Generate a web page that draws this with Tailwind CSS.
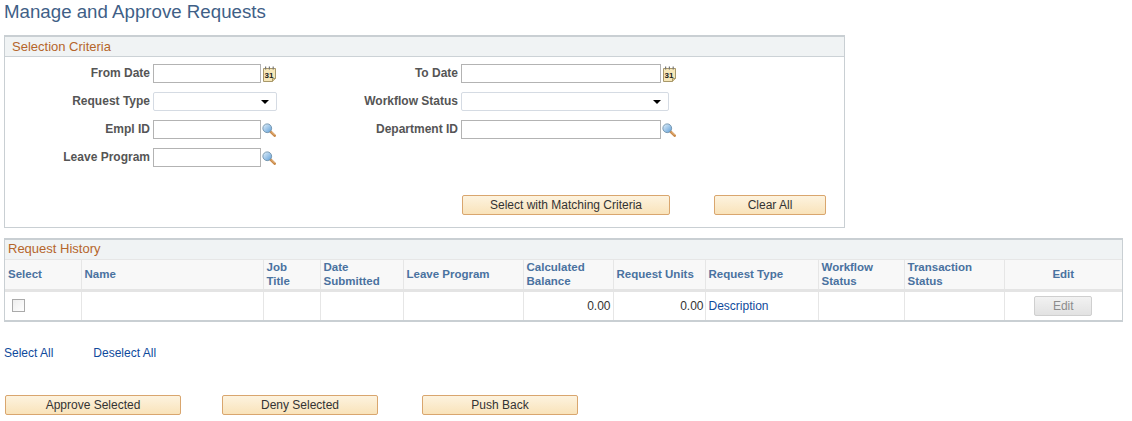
<!DOCTYPE html>
<html lang="en">
<head>
<meta charset="utf-8">
<title>Manage and Approve Requests</title>
<script src="https://cdn.jsdelivr.net/npm/@tailwindcss/browser@4"></script>
</head>
<body class="bg-white font-['Liberation_Sans',Arial,sans-serif] text-[12px] text-[#333]">
<svg class="absolute w-0 h-0">
    <defs>
        <linearGradient id="lens" x1="0" y1="0" x2="1" y2="1">
            <stop offset="0" stop-color="#e4f1fb"/>
            <stop offset="1" stop-color="#5f9fd8"/>
        </linearGradient>
        <symbol id="search" viewBox="0 0 16 16">
            <path d="M9.5 9.5 L14.5 14.5" stroke="#c98a4a" stroke-width="3" stroke-linecap="round"/>
            <path d="M10.5 9.8 L14.6 13.9" stroke="#f0c48e" stroke-width="1"/>
            <circle cx="6" cy="6" r="5" fill="url(#lens)" stroke="#6d8fa8" stroke-width="1"/>
        </symbol>
        <symbol id="cal" viewBox="0 0 13 16">
            <path d="M0.5 2.5H12.5V12.5L9.5 15.5H0.5Z" fill="#f6e7b8" stroke="#a8986a"/>
            <path d="M9.5 15.5V12.5H12.5" fill="#d9c88e" stroke="#a8986a"/>
            <rect x="2" y="0.5" width="1.2" height="3" fill="#777"/>
            <rect x="5.8" y="0.5" width="1.2" height="3" fill="#777"/>
            <rect x="9.6" y="0.5" width="1.2" height="3" fill="#777"/>
            <text x="6" y="11.5" text-anchor="middle" font-family="Liberation Sans" font-weight="700" font-size="8" fill="#222">31</text>
        </symbol>
    </defs>
</svg>

<h1 class="h-[35px] pl-[4px] pt-[1px] text-[18.7px] leading-[22px] text-[#3f5f87]">Manage and Approve Requests</h1>

<!-- selection criteria -->
<section class="ml-[4px] w-[841px] h-[193px] border border-[#c9cfd3] border-t-2">
    <h2 class="h-[20px] pl-[7px] bg-[#f0f3f4] border-b border-[#ccd2d6] text-[13px] leading-[20px] text-[#b5652b]">Selection Criteria</h2>
    <div class="grid grid-cols-[145px_177px_125px_1fr] gap-x-[3px] auto-rows-[28px] pt-[7px] font-bold text-[#555]">
        <label class="text-right leading-[19px]">From Date</label>
        <div class="flex items-start gap-[2px]">
            <input class="w-[108px] h-[19px] bg-white border border-[#b3b3b3]">
            <svg class="w-[13px] h-[16px] mt-[2px]"><use href="#cal"/></svg>
        </div>
        <label class="text-right leading-[19px]">To Date</label>
        <div class="flex items-start gap-[2px]">
            <input class="w-[200px] h-[19px] bg-white border border-[#b3b3b3]">
            <svg class="w-[13px] h-[16px] mt-[2px]"><use href="#cal"/></svg>
        </div>

        <label class="text-right leading-[19px]">Request Type</label>
        <div>
            <div class="relative w-[124px] h-[19px] bg-white border border-[#d5dbe3] rounded-[2px]">
                <span class="absolute right-[7px] top-[7px] border-x-[4px] border-t-[4px] border-x-transparent border-t-black"></span>
            </div>
        </div>
        <label class="text-right leading-[19px]">Workflow Status</label>
        <div>
            <div class="relative w-[208px] h-[19px] bg-white border border-[#d5dbe3] rounded-[2px]">
                <span class="absolute right-[7px] top-[7px] border-x-[4px] border-t-[4px] border-x-transparent border-t-black"></span>
            </div>
        </div>

        <label class="text-right leading-[19px]">Empl ID</label>
        <div class="flex items-start gap-[1px]">
            <input class="w-[108px] h-[19px] bg-white border border-[#b3b3b3]">
            <svg class="w-[14px] h-[14px] mt-[3px]"><use href="#search"/></svg>
        </div>
        <label class="text-right leading-[19px]">Department ID</label>
        <div class="flex items-start gap-[1px]">
            <input class="w-[200px] h-[19px] bg-white border border-[#b3b3b3]">
            <svg class="w-[14px] h-[14px] mt-[3px]"><use href="#search"/></svg>
        </div>

        <label class="text-right leading-[19px]">Leave Program</label>
        <div class="flex items-start gap-[1px]">
            <input class="w-[108px] h-[19px] bg-white border border-[#b3b3b3]">
            <svg class="w-[14px] h-[14px] mt-[3px]"><use href="#search"/></svg>
        </div>
    </div>
    <div class="flex mt-[19px] ml-[457px] gap-[44px]">
        <button class="w-[208px] h-[20px] border border-[#d9a66e] rounded-[2px] bg-gradient-to-b from-[#fdf3df] to-[#f9e3ba] text-[#333]">Select with Matching Criteria</button>
        <button class="w-[112px] h-[20px] border border-[#d9a66e] rounded-[2px] bg-gradient-to-b from-[#fdf3df] to-[#f9e3ba] text-[#333]">Clear All</button>
    </div>
</section>

<!-- request history -->
<section class="ml-[4px] mt-[10px] w-[1119px] border-2 border-[#c9cfd3] border-x-[1px]">
    <h2 class="h-[19px] pl-[3px] bg-[#f0f3f4] text-[13px] leading-[17px] text-[#b5652b]">Request History</h2>
    <table class="w-full table-fixed border-collapse">
        <colgroup>
            <col class="w-[76px]"><col class="w-[182px]"><col class="w-[57px]"><col class="w-[83px]"><col class="w-[120px]"><col class="w-[90px]"><col class="w-[92px]"><col class="w-[113px]"><col class="w-[86px]"><col class="w-[100px]"><col>
        </colgroup>
        <thead>
            <tr class="h-[31px] bg-[#f8f8f8] border-y border-b-[3px] border-t-[#e6e6e6] border-b-[#e4e4e4] text-left text-[11.5px] leading-[14px] font-bold text-[#4a72a0] [&>th]:pb-[1px]">
                <th class="pl-[3px] font-bold">Select</th>
                <th class="pl-[3px] font-bold border-l border-[#e6e6e6]">Name</th>
                <th class="pl-[3px] font-bold border-l border-[#e6e6e6]">Job<br>Title</th>
                <th class="pl-[3px] font-bold border-l border-[#e6e6e6]">Date<br>Submitted</th>
                <th class="pl-[3px] font-bold border-l border-[#e6e6e6]">Leave Program</th>
                <th class="pl-[3px] font-bold border-l border-[#e6e6e6]">Calculated<br>Balance</th>
                <th class="pl-[3px] font-bold border-l border-[#e6e6e6]">Request Units</th>
                <th class="pl-[3px] font-bold border-l border-[#e6e6e6]">Request Type</th>
                <th class="pl-[3px] font-bold border-l border-[#e6e6e6]">Workflow<br>Status</th>
                <th class="pl-[3px] font-bold border-l border-[#e6e6e6]">Transaction<br>Status</th>
                <th class="font-bold border-l border-[#e6e6e6] text-center">Edit</th>
            </tr>
        </thead>
        <tbody>
            <tr class="h-[29px]">
                <td class="pl-[7px]"><div class="w-[13px] h-[13px] border border-[#aaa] bg-gradient-to-br from-[#eee] to-white"></div></td>
                <td class="border-l border-[#e6e6e6]"></td>
                <td class="border-l border-[#e6e6e6]"></td>
                <td class="border-l border-[#e6e6e6]"></td>
                <td class="border-l border-[#e6e6e6]"></td>
                <td class="border-l border-[#e6e6e6] pr-[2px] text-right">0.00</td>
                <td class="border-l border-[#e6e6e6] pr-[1px] text-right">0.00</td>
                <td class="border-l border-[#e6e6e6] pl-[3px] text-[#0f4a9c]">Description</td>
                <td class="border-l border-[#e6e6e6]"></td>
                <td class="border-l border-[#e6e6e6]"></td>
                <td class="border-l border-[#e6e6e6] text-center">
                    <button class="w-[58px] h-[20px] border border-[#cfcfcf] rounded-[2px] bg-gradient-to-b from-[#f2f2f2] to-[#e2e2e2] text-[#8c8c8c]">Edit</button>
                </td>
            </tr>
        </tbody>
    </table>
</section>

<div class="flex pl-[4px] pt-[24px] gap-[40px] text-[#0f4a9c] leading-[14px]">
    <a>Select All</a>
    <a>Deselect All</a>
</div>

<div class="flex ml-[5px] mt-[35px]">
    <button class="w-[176px] h-[20px] border border-[#d9a66e] rounded-[2px] bg-gradient-to-b from-[#fdf3df] to-[#f9e3ba]">Approve Selected</button>
    <button class="w-[156px] h-[20px] ml-[41px] border border-[#d9a66e] rounded-[2px] bg-gradient-to-b from-[#fdf3df] to-[#f9e3ba]">Deny Selected</button>
    <button class="w-[156px] h-[20px] ml-[44px] border border-[#d9a66e] rounded-[2px] bg-gradient-to-b from-[#fdf3df] to-[#f9e3ba]">Push Back</button>
</div>
</body>
</html>
